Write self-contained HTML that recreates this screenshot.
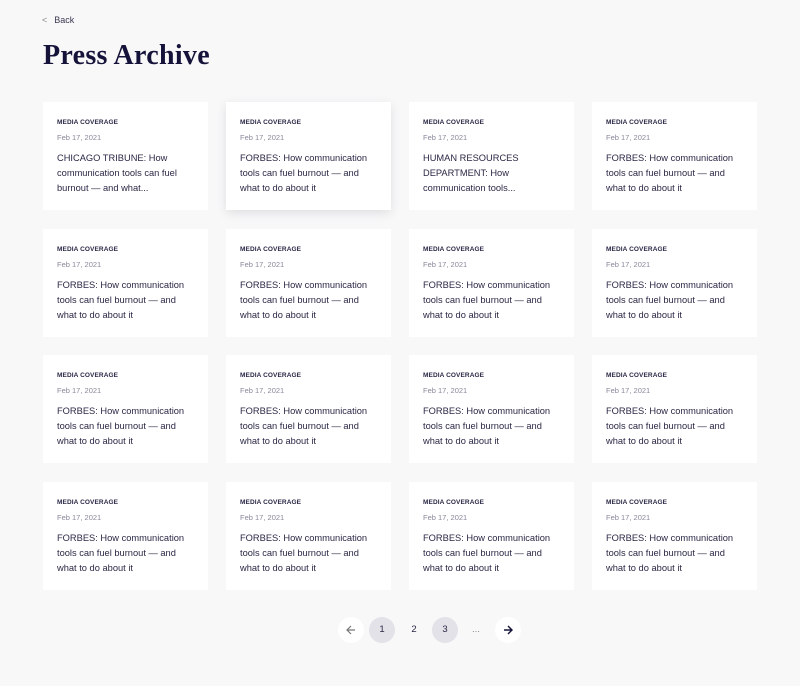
<!DOCTYPE html>
<html><head><style>
*{margin:0;padding:0;box-sizing:border-box}
body{width:800px;height:686px;background:#f8f8f9;font-family:"Liberation Sans",sans-serif;color:#2a2845;position:relative;overflow:hidden}
.back{position:absolute;left:42px;top:15px;font-size:9px;color:#3b3950}
.back span{color:#888;margin-right:7px}
h1{position:absolute;left:43px;top:40px;font-family:"Liberation Serif",serif;font-size:28px;font-weight:bold;color:#15133a;letter-spacing:0.3px}
.card{position:absolute;width:165px;height:108px;background:#fff;padding:17px 14px 0 14px}
.card.hov{box-shadow:0 3px 10px rgba(0,0,0,0.1)}
.cat{font-size:6.5px;font-weight:bold;letter-spacing:0.1px;color:#2a2845;height:14px}
.date{font-size:7.5px;color:#8a889a;height:18px}
.t{font-size:9.3px;line-height:15px;color:#2a2845}
.pg{position:absolute;top:617px;width:26px;height:26px;border-radius:50%;text-align:center;line-height:26px;font-size:9.5px;color:#2a2845}
.pg svg{position:absolute;left:7px;top:7px}
</style></head><body>
<div class="back"><span>&lt;</span>Back</div>
<h1>Press Archive</h1>
<div id="g"></div>
<script>
var g=document.getElementById('g'),h='';
var xs=[43,226,409,592],ys=[102,229,355,482];
var F='FORBES: How communication tools can fuel burnout — and what to do about it';
for(var r=0;r<4;r++)for(var c=0;c<4;c++){
var t=F;
if(r==0&&c==0)t='CHICAGO TRIBUNE: How communication tools can fuel burnout — and what...';
if(r==0&&c==2)t='HUMAN RESOURCES DEPARTMENT: How communication tools...';
h+='<div class="card'+(r==0&&c==1?' hov':'')+'" style="left:'+xs[c]+'px;top:'+ys[r]+'px"><div class="cat">MEDIA COVERAGE</div><div class="date">Feb 17, 2021</div><div class="t">'+t+'</div></div>';}
g.innerHTML=h;
</script>
<div class="pg" style="left:338px;background:#fff"><svg width="12" height="12" viewBox="0 0 12 12"><path d="M10 6H2M6 2L2 6l4 4" fill="none" stroke="#777" stroke-width="1.2"/></svg></div>
<div class="pg" style="left:369px;background:#e3e2e8">1</div>
<div class="pg" style="left:401px">2</div>
<div class="pg" style="left:432px;background:#e3e2e8">3</div>
<div class="pg" style="left:463px;color:#888">...</div>
<div class="pg" style="left:495px;background:#fff"><svg width="12" height="12" viewBox="0 0 12 12"><path d="M2 6h8M6 2l4 4-4 4" fill="none" stroke="#15133a" stroke-width="1.4"/></svg></div>
</body></html>
